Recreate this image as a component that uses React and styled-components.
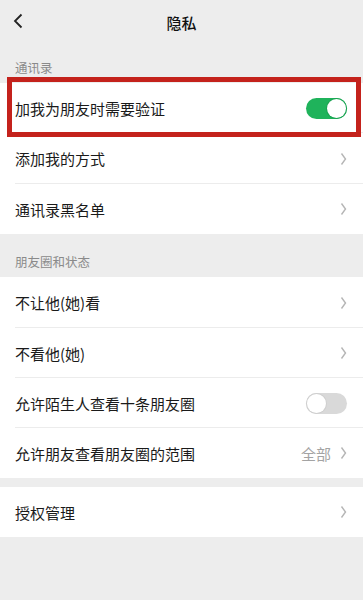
import styled, { createGlobalStyle } from "styled-components"

const GlobalStyle = createGlobalStyle`
    html, body {
        margin: 0;
        padding: 0;
        background: #ededed;
    }
    body {
        font-family: "Noto Sans CJK SC", "Noto Sans", sans-serif;
        color: #1a1a1a;
    }
`

const Page = styled.div`
    position: relative;
    width: 363px;
    height: 600px;
    background: #ededed;
    overflow: hidden;
`

const Header = styled.div`
    height: 42px;
    display: grid;
    grid-template-columns: 44px 1fr 44px;
    align-items: center;
`

const BackButton = styled.div`
    display: flex;
    align-items: center;
    padding-left: 13px;
    padding-top: 0px;
`

const Title = styled.div`
    text-align: center;
    font-size: 15px;
    font-weight: 500;
    color: #111;
    padding-top: 2px;
`

const SectionLabel = styled.div`
    height: ${p => p.h}px;
    display: flex;
    align-items: flex-end;
    box-sizing: border-box;
    padding: 0 15px 6px;
    font-size: 12.5px;
    color: #8a8a8a;
`

const Group = styled.div`
    background: #fff;
    margin-bottom: ${p => p.gap || 0}px;
`

const Row = styled.div`
    height: ${p => p.h || 50}px;
    display: flex;
    align-items: center;
    padding: 0 15px;
    box-sizing: border-box;
    position: relative;
    &:not(:last-child)::after {
        content: "";
        position: absolute;
        left: 15px;
        right: 0;
        bottom: 0;
        height: 1px;
        background: #ececec;
    }
`

const Label = styled.div`
    flex: 1;
    font-size: 15px;
    color: #1a1a1a;
`

const Value = styled.span`
    font-size: 15px;
    color: #a3a3a3;
    margin-right: 9px;
`

const Track = styled.div`
    width: 41px;
    height: 21px;
    border-radius: 11px;
    position: relative;
    background: ${p => (p.on ? "#1fb35b" : "#d9d9d9")};
    margin-right: 1px;
`

const Knob = styled.div`
    position: absolute;
    top: 1px;
    ${p => (p.on ? "right: 1px;" : "left: 1px;")}
    width: 19px;
    height: 19px;
    border-radius: 50%;
    background: #fff;
    box-shadow: 0 0 0 1px ${p => (p.on ? "#1aa352" : "#cfcfcf")};
`

const Highlight = styled.div`
    position: absolute;
    left: 7px;
    top: 77px;
    width: 354px;
    height: 60px;
    box-sizing: border-box;
    border: 5px solid #c4221c;
`

function Chevron() {
    return (
        <svg width="7" height="14" viewBox="0 0 7 14" style={{ marginRight: 1 }}>
            <path d="M1.5 1.5 L5.5 7 L1.5 12.5" fill="none" stroke="#b5b5b5" strokeWidth="1.4" />
        </svg>
    )
}

function Switch({ on }) {
    return (
        <Track on={on}>
            <Knob on={on} />
        </Track>
    )
}

export default function App() {
    return (
        <Page>
            <GlobalStyle />
            <Header>
                <BackButton>
                    <svg width="10" height="16" viewBox="0 0 10 16">
                        <path d="M8.5 1.5 L2 8 L8.5 14.5" fill="none" stroke="#222" strokeWidth="1.8" />
                    </svg>
                </BackButton>
                <Title>隐私</Title>
                <div />
            </Header>

            <SectionLabel h={41}>通讯录</SectionLabel>
            <Group>
                <Row h={50}>
                    <Label>加我为朋友时需要验证</Label>
                    <Switch on />
                </Row>
                <Row h={51}>
                    <Label>添加我的方式</Label>
                    <Chevron />
                </Row>
                <Row h={50}>
                    <Label>通讯录黑名单</Label>
                    <Chevron />
                </Row>
            </Group>

            <SectionLabel h={43}>朋友圈和状态</SectionLabel>
            <Group gap={9}>
                <Row h={51}>
                    <Label>不让他(她)看</Label>
                    <Chevron />
                </Row>
                <Row h={50}>
                    <Label>不看他(她)</Label>
                    <Chevron />
                </Row>
                <Row h={50}>
                    <Label>允许陌生人查看十条朋友圈</Label>
                    <Switch />
                </Row>
                <Row h={50}>
                    <Label>允许朋友查看朋友圈的范围</Label>
                    <Value>全部</Value>
                    <Chevron />
                </Row>
            </Group>

            <Group>
                <Row h={50}>
                    <Label>授权管理</Label>
                    <Chevron />
                </Row>
            </Group>

            <Highlight />
        </Page>
    )
}
